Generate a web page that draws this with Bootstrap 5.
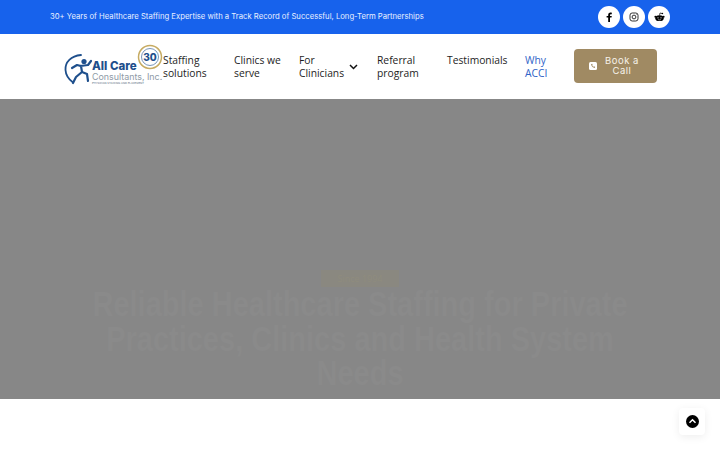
<!DOCTYPE html>
<html lang="en">
<head>
    <meta charset="UTF-8">
    <title>All Care Consultants</title>
    <link href="https://cdn.jsdelivr.net/npm/bootstrap@5.3.2/dist/css/bootstrap.min.css" rel="stylesheet">
    <style>
        body {
            height: 450px;
            overflow: hidden;
            font-family: "Open Sans", sans-serif;
            background: #fff;
        }

        .top-strip {
            height: 34px;
            background: #1762ec;
            padding: 0 50px;
        }

        .top-strip-text {
            font-family: Inter, sans-serif;
            font-size: 7.700px;
            color: #e9f0ff;
        }

        .social-row {
            gap: 3px;
        }

        .social-dot {
            width: 22px;
            height: 22px;
            background: #fff;
            border-radius: 50%;
        }

        .main-head {
            height: 65px;
            padding: 0 0 1px 64px;
        }

        .brand-box {
            width: 99px;
            height: 44px;
            flex: none;
            position: relative;
        }

        .brand-name {
            position: absolute;
            left: 28px;
            top: 16px;
            font-family: Inter, sans-serif;
            font-size: 11.500px;
            font-weight: 800;
            line-height: 12px;
            color: #1e4f8c;
            white-space: nowrap;
        }

        .brand-sub {
            position: absolute;
            left: 28px;
            top: 28px;
            font-family: Inter, sans-serif;
            font-size: 8.900px;
            line-height: 10px;
            color: #8e9aa6;
            white-space: nowrap;
        }

        .brand-tiny {
            position: absolute;
            left: 28px;
            top: 38px;
            font-family: Inter, sans-serif;
            font-size: 2.700px;
            line-height: 3px;
            color: #5a6d80;
            white-space: nowrap;
        }

        .brand-seal {
            position: absolute;
            left: 74px;
            top: 6px;
            width: 24px;
            font-family: Inter, sans-serif;
            font-size: 10px;
            font-weight: 800;
            line-height: 14px;
            text-align: center;
            color: #1e4f8c;
        }

        .brand-svg {
            position: absolute;
            left: 0;
            top: 0;
        }

        .menu-grid {
            display: grid;
            grid-template-columns: 71px 65px 78px 70px 78px 49px 83px;
            align-items: center;
        }

        .menu-link {
            min-height: 28px;
            padding-top: 2px;
            font-size: 10.300px;
            font-weight: 500;
            line-height: 13px;
            color: #1d1d1d;
            text-decoration: none;
        }

        .menu-link.menu-blue {
            color: #2f63c7;
        }

        .for-link {
            width: 59px;
        }

        .book-btn {
            width: 83px;
            height: 34px;
            padding: 0 3px 0 0;
            background: #a08a63;
            border: 0;
            border-radius: 4px;
            color: #f6f2ea;
            font-family: Inter, sans-serif;
            font-size: 9.500px;
            letter-spacing: .5px;
            line-height: 10px;
        }

        .hero-block {
            height: 300px;
            background: #878787;
        }

        .hero-tag {
            width: 78px;
            height: 17px;
            margin-top: 171px;
            background: #8a8880;
            color: #8f8c7e;
            font-size: 9px;
            line-height: 17px;
        }

        .hero-title {
            width: 560px;
            font-family: "Liberation Sans", sans-serif;
            font-size: 29px;
            font-weight: 700;
            line-height: 29px;
            color: #8a8a8a;
            transform: scaleY(1.200);
            transform-origin: top center;
        }

        .up-box {
            position: absolute;
            right: 15px;
            bottom: 15px;
            width: 26px;
            height: 27px;
            background: #fff;
            border-radius: 4px;
            box-shadow: 0 2px 8px rgba(0, 0, 0, .07);
        }
    </style>
</head>
<body class="position-relative">

<div class="top-strip d-flex align-items-center justify-content-between">
    <span class="top-strip-text">30+ Years of Healthcare Staffing Expertise with a Track Record of Successful, Long-Term Partnerships</span>
    <div class="social-row d-flex">
        <a class="social-dot d-flex align-items-center justify-content-center" href="#">
            <svg width="10" height="10" viewBox="0 0 10 10"><path d="M6 10V5.600h1.500L7.800 4H6V3c0-.5.2-.8.8-.8h1V.7C7.500.7 7 .6 6.500.6 5.100.6 4.200 1.500 4.200 2.900V4H2.600v1.600h1.600V10z" fill="#000"/></svg>
        </a>
        <a class="social-dot d-flex align-items-center justify-content-center" href="#">
            <svg width="10" height="10" viewBox="0 0 10 10" fill="none" stroke="#333" stroke-width="1"><rect x="1" y="1" width="8" height="8" rx="2.200"/><circle cx="5" cy="5" r="1.900"/><circle cx="7.300" cy="2.700" r=".4" fill="#333" stroke="none"/></svg>
        </a>
        <a class="social-dot d-flex align-items-center justify-content-center" href="#">
            <svg width="11" height="10" viewBox="0 0 11 10"><ellipse cx="5.500" cy="6.200" rx="4.200" ry="2.900" fill="#000"/><circle cx="1.400" cy="4.700" r="1" fill="#000"/><circle cx="9.600" cy="4.700" r="1" fill="#000"/><path d="M5.500 3.400 6 1l2 .5" fill="none" stroke="#000" stroke-width=".7"/><circle cx="8.400" cy="1.500" r=".8" fill="#000"/><circle cx="4" cy="5.800" r=".6" fill="#fff"/><circle cx="7" cy="5.800" r=".6" fill="#fff"/><path d="M4 7.500c.9.500 2.100.5 3 0" stroke="#fff" stroke-width=".5" fill="none"/></svg>
        </a>
    </div>
</div>

<div class="main-head d-flex align-items-center">
    <div class="brand-box">
        <svg class="brand-svg" width="99" height="44" viewBox="0 0 99 44" fill="none">
            <path d="M17 11C7 12 1 18 1.500 26c.3 5 3 9 7 12" stroke="#1e4f8c" stroke-width="1.800" stroke-linecap="round"/>
            <circle cx="20" cy="17.500" r="2.600" fill="#1e4f8c"/>
            <path d="M8 24l5-3 4 1 1 6-6 5-3 6M18 28l5 2 1 7M16 22l8-1 3-4" stroke="#1e4f8c" stroke-width="2.200" stroke-linecap="round" stroke-linejoin="round"/>
            <circle cx="86" cy="13" r="11.500" fill="#fff" stroke="#c6ab62" stroke-width="1.500"/>
            <circle cx="86" cy="13" r="8.500" stroke="#1e4f8c" stroke-width=".6"/>
        </svg>
        <span class="brand-name">All Care</span>
        <span class="brand-sub">Consultants, Inc.</span>
        <span class="brand-tiny">PHYSICIAN STAFFING AND PLACEMENT</span>
        <span class="brand-seal">30</span>
    </div>
    <nav class="menu-grid">
        <a class="menu-link" href="#">Staffing<br>solutions</a>
        <a class="menu-link" href="#">Clinics we<br>serve</a>
        <a class="menu-link for-link d-flex align-items-center justify-content-between" href="#"><span>For<br>Clinicians</span>
            <svg width="9" height="6" viewBox="0 0 9 6" fill="none" stroke="#111" stroke-width="1.500"><path d="M1 1l3.500 3.500L8 1"/></svg>
        </a>
        <a class="menu-link" href="#">Referral<br>program</a>
        <a class="menu-link" href="#">Testimonials</a>
        <a class="menu-link menu-blue" href="#">Why<br>ACCI</a>
        <button class="book-btn d-flex align-items-center justify-content-center gap-2" type="button">
            <svg width="8" height="8" viewBox="0 0 8 8"><rect width="8" height="8" rx="1.500" fill="#fff"/><path d="M2 2.200c.3 1.800 1.800 3.300 3.700 3.700l.5-1-1.100-.6-.5.500c-.6-.3-1.100-.8-1.400-1.400l.5-.5-.6-1.100z" fill="#a08a63"/></svg>
            <span>Book a<br>Call</span>
        </button>
    </nav>
</div>

<div class="hero-block d-flex flex-column align-items-center text-center overflow-hidden">
    <div class="hero-tag">Since 1994</div>
    <div class="hero-title">Reliable Healthcare Staffing for Private<br>Practices, Clinics and Health System<br>Needs</div>
</div>

<a class="up-box d-flex align-items-center justify-content-center" href="#">
    <svg width="13" height="13" viewBox="0 0 13 13"><circle cx="6.500" cy="6.500" r="6.500" fill="#000"/><path d="M3.500 7.800l3-3 3 3" fill="none" stroke="#fff" stroke-width="1.500"/></svg>
</a>

<script src="https://cdn.jsdelivr.net/npm/bootstrap@5.3.2/dist/js/bootstrap.bundle.min.js"></script>
</body>
</html>
